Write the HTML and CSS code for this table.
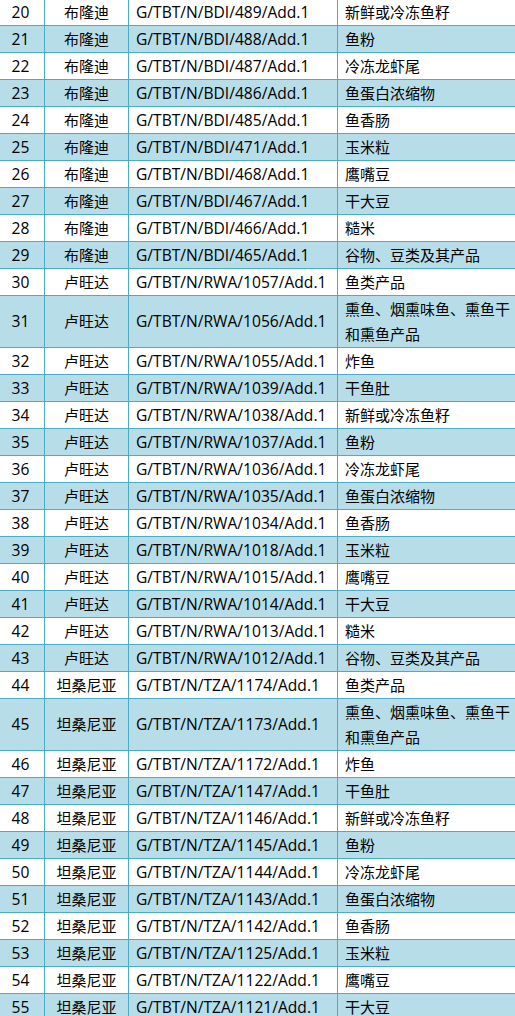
FILE: index.html
```html
<!DOCTYPE html>
<html lang="zh-CN">
<head>
<meta charset="utf-8">
<title>TBT通报</title>
<link rel="stylesheet" href="styles.css">
</head>
<body>
<table class="grid">
<colgroup>
<col class="c-no"><col class="c-country"><col class="c-code"><col class="c-prod">
</colgroup>
<tbody>
<tr><td class="no">20</td><td class="cty">布隆迪</td><td class="code">G/TBT/N/BDI/489/Add.1</td><td class="prod">新鲜或冷冻鱼籽</td></tr>
<tr><td class="no">21</td><td class="cty">布隆迪</td><td class="code">G/TBT/N/BDI/488/Add.1</td><td class="prod">鱼粉</td></tr>
<tr><td class="no">22</td><td class="cty">布隆迪</td><td class="code">G/TBT/N/BDI/487/Add.1</td><td class="prod">冷冻龙虾尾</td></tr>
<tr><td class="no">23</td><td class="cty">布隆迪</td><td class="code">G/TBT/N/BDI/486/Add.1</td><td class="prod">鱼蛋白浓缩物</td></tr>
<tr><td class="no">24</td><td class="cty">布隆迪</td><td class="code">G/TBT/N/BDI/485/Add.1</td><td class="prod">鱼香肠</td></tr>
<tr><td class="no">25</td><td class="cty">布隆迪</td><td class="code">G/TBT/N/BDI/471/Add.1</td><td class="prod">玉米粒</td></tr>
<tr><td class="no">26</td><td class="cty">布隆迪</td><td class="code">G/TBT/N/BDI/468/Add.1</td><td class="prod">鹰嘴豆</td></tr>
<tr><td class="no">27</td><td class="cty">布隆迪</td><td class="code">G/TBT/N/BDI/467/Add.1</td><td class="prod">干大豆</td></tr>
<tr><td class="no">28</td><td class="cty">布隆迪</td><td class="code">G/TBT/N/BDI/466/Add.1</td><td class="prod">糙米</td></tr>
<tr><td class="no">29</td><td class="cty">布隆迪</td><td class="code">G/TBT/N/BDI/465/Add.1</td><td class="prod">谷物、豆类及其产品</td></tr>
<tr><td class="no">30</td><td class="cty">卢旺达</td><td class="code">G/TBT/N/RWA/1057/Add.1</td><td class="prod">鱼类产品</td></tr>
<tr class="tall"><td class="no">31</td><td class="cty">卢旺达</td><td class="code">G/TBT/N/RWA/1056/Add.1</td><td class="prod">熏鱼、烟熏味鱼、熏鱼干和熏鱼产品</td></tr>
<tr><td class="no">32</td><td class="cty">卢旺达</td><td class="code">G/TBT/N/RWA/1055/Add.1</td><td class="prod">炸鱼</td></tr>
<tr><td class="no">33</td><td class="cty">卢旺达</td><td class="code">G/TBT/N/RWA/1039/Add.1</td><td class="prod">干鱼肚</td></tr>
<tr><td class="no">34</td><td class="cty">卢旺达</td><td class="code">G/TBT/N/RWA/1038/Add.1</td><td class="prod">新鲜或冷冻鱼籽</td></tr>
<tr><td class="no">35</td><td class="cty">卢旺达</td><td class="code">G/TBT/N/RWA/1037/Add.1</td><td class="prod">鱼粉</td></tr>
<tr><td class="no">36</td><td class="cty">卢旺达</td><td class="code">G/TBT/N/RWA/1036/Add.1</td><td class="prod">冷冻龙虾尾</td></tr>
<tr><td class="no">37</td><td class="cty">卢旺达</td><td class="code">G/TBT/N/RWA/1035/Add.1</td><td class="prod">鱼蛋白浓缩物</td></tr>
<tr><td class="no">38</td><td class="cty">卢旺达</td><td class="code">G/TBT/N/RWA/1034/Add.1</td><td class="prod">鱼香肠</td></tr>
<tr><td class="no">39</td><td class="cty">卢旺达</td><td class="code">G/TBT/N/RWA/1018/Add.1</td><td class="prod">玉米粒</td></tr>
<tr><td class="no">40</td><td class="cty">卢旺达</td><td class="code">G/TBT/N/RWA/1015/Add.1</td><td class="prod">鹰嘴豆</td></tr>
<tr><td class="no">41</td><td class="cty">卢旺达</td><td class="code">G/TBT/N/RWA/1014/Add.1</td><td class="prod">干大豆</td></tr>
<tr><td class="no">42</td><td class="cty">卢旺达</td><td class="code">G/TBT/N/RWA/1013/Add.1</td><td class="prod">糙米</td></tr>
<tr><td class="no">43</td><td class="cty">卢旺达</td><td class="code">G/TBT/N/RWA/1012/Add.1</td><td class="prod">谷物、豆类及其产品</td></tr>
<tr><td class="no">44</td><td class="cty">坦桑尼亚</td><td class="code">G/TBT/N/TZA/1174/Add.1</td><td class="prod">鱼类产品</td></tr>
<tr class="tall"><td class="no">45</td><td class="cty">坦桑尼亚</td><td class="code">G/TBT/N/TZA/1173/Add.1</td><td class="prod">熏鱼、烟熏味鱼、熏鱼干和熏鱼产品</td></tr>
<tr><td class="no">46</td><td class="cty">坦桑尼亚</td><td class="code">G/TBT/N/TZA/1172/Add.1</td><td class="prod">炸鱼</td></tr>
<tr><td class="no">47</td><td class="cty">坦桑尼亚</td><td class="code">G/TBT/N/TZA/1147/Add.1</td><td class="prod">干鱼肚</td></tr>
<tr><td class="no">48</td><td class="cty">坦桑尼亚</td><td class="code">G/TBT/N/TZA/1146/Add.1</td><td class="prod">新鲜或冷冻鱼籽</td></tr>
<tr><td class="no">49</td><td class="cty">坦桑尼亚</td><td class="code">G/TBT/N/TZA/1145/Add.1</td><td class="prod">鱼粉</td></tr>
<tr><td class="no">50</td><td class="cty">坦桑尼亚</td><td class="code">G/TBT/N/TZA/1144/Add.1</td><td class="prod">冷冻龙虾尾</td></tr>
<tr><td class="no">51</td><td class="cty">坦桑尼亚</td><td class="code">G/TBT/N/TZA/1143/Add.1</td><td class="prod">鱼蛋白浓缩物</td></tr>
<tr><td class="no">52</td><td class="cty">坦桑尼亚</td><td class="code">G/TBT/N/TZA/1142/Add.1</td><td class="prod">鱼香肠</td></tr>
<tr><td class="no">53</td><td class="cty">坦桑尼亚</td><td class="code">G/TBT/N/TZA/1125/Add.1</td><td class="prod">玉米粒</td></tr>
<tr><td class="no">54</td><td class="cty">坦桑尼亚</td><td class="code">G/TBT/N/TZA/1122/Add.1</td><td class="prod">鹰嘴豆</td></tr>
<tr><td class="no">55</td><td class="cty">坦桑尼亚</td><td class="code">G/TBT/N/TZA/1121/Add.1</td><td class="prod">干大豆</td></tr>
</tbody>
</table>
</body>
</html>
```

FILE: styles.css
```css
html, body {
  margin: 0;
  padding: 0;
  background: #ffffff;
  overflow: hidden;
}

.grid {
  border-collapse: collapse;
  table-layout: fixed;
  width: 524px;
  margin: -2px 0 0 -4px;
  font-family: "Open Sans", "Noto Sans CJK SC", sans-serif;
  font-size: 15px;
  color: #000000;
}

.c-no { width: 48px; }
.c-country { width: 84px; }
.c-code { width: 209px; }
.c-prod { width: 183px; }

.grid tr {
  height: 27px;
}

.grid tr.tall {
  height: 52px;
}

.grid tr:nth-child(even) td {
  background: #b7dde8;
}

.grid td {
  border: 1px solid #4bacc6;
  padding: 0 7px;
  vertical-align: middle;
  line-height: 25px;
  white-space: nowrap;
  overflow: hidden;
}

.grid td.no,
.grid td.cty {
  text-align: center;
  padding: 0;
}

.grid td.no,
.grid td.code {
  font-size: 15.6px;
}

.grid td.prod {
  white-space: normal;
  padding-right: 0;
}
```
